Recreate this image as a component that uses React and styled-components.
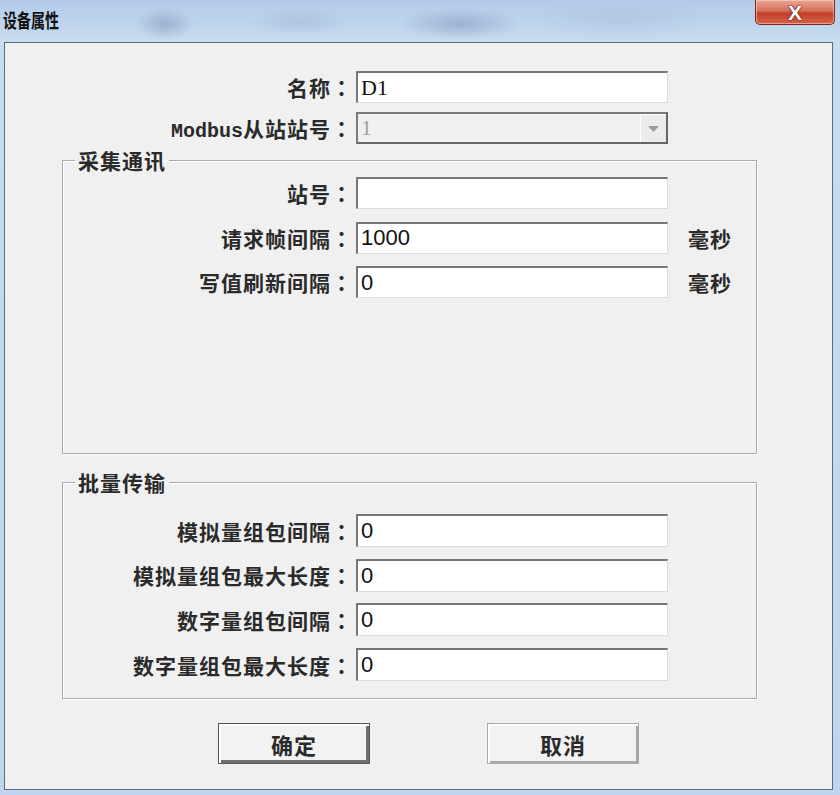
import styled, { createGlobalStyle } from "styled-components";

const GlobalStyle = createGlobalStyle`
    html, body {
        margin: 0;
        padding: 0;
    }
    body {
        width: 840px;
        height: 795px;
        overflow: hidden;
        background: #c3d8ee;
        font-family: "Liberation Sans", "Noto Sans CJK SC", sans-serif;
    }
`;

const Window = styled.div`
    width: 840px;
    height: 795px;
    box-sizing: border-box;
    display: flex;
    flex-direction: column;
    padding: 0 7px 5px 4px;
    background:
        radial-gradient(ellipse 30px 16px at 165px 24px, rgba(70, 100, 140, 0.3), transparent),
        radial-gradient(ellipse 50px 14px at 300px 22px, rgba(120, 150, 185, 0.25), transparent),
        radial-gradient(ellipse 60px 16px at 460px 24px, rgba(70, 100, 150, 0.3), transparent),
        radial-gradient(ellipse 90px 20px at 620px 20px, rgba(150, 180, 210, 0.3), transparent),
        linear-gradient(180deg, #b2cbe7 0%, #c8dcf0 42px, #bed5ed 100%);
`;

const TitleBar = styled.div`
    height: 42px;
    flex-shrink: 0;
    display: flex;
    justify-content: space-between;
    align-items: flex-start;
`;

const Title = styled.span`
    margin: 8px 0 0 -1px;
    font-family: "Noto Sans CJK SC", sans-serif;
    font-size: 14px;
    font-weight: 700;
    line-height: 16px;
    color: #111;
    display: inline-block;
    transform: scale(1, 1.4);
    transform-origin: top left;
`;

const CloseButton = styled.div`
    width: 80px;
    height: 25px;
    margin-right: -2px;
    box-sizing: border-box;
    border: 1px solid #7c2a1e;
    border-top: none;
    border-radius: 0 0 5px 5px;
    background: linear-gradient(180deg, #e9a794 0%, #d7705a 45%, #c3402b 55%, #d4624a 100%);
    box-shadow: inset 0 0 0 1px rgba(255, 220, 210, 0.5);
    display: flex;
    align-items: center;
    justify-content: center;
    color: #fff;
    font-family: "Liberation Sans", sans-serif;
    font-weight: 700;
    font-size: 21px;
    line-height: 21px;
    text-shadow: 0 0 2px #5a1a10, 0 0 1px #5a1a10, 0 0 1px #5a1a10;
`;

const Client = styled.div`
    flex: 1;
    border: 1px solid #5d6c7c;
    background: #f0f0f0;
    display: flex;
    flex-direction: column;
    padding-top: 28px;
`;

const Rows = styled.div`
    display: flex;
    flex-direction: column;
    gap: ${props => props.$gap}px;
`;

const Row = styled.div`
    display: flex;
    align-items: center;
    height: ${props => props.$h || 32}px;
`;

const Label = styled.label`
    width: ${props => props.$w}px;
    margin-right: 4px;
    text-align: right;
    font-family: "Liberation Mono", "Noto Sans CJK SC", monospace;
    font-size: 21px;
    letter-spacing: 1px;
    font-weight: 700;
    color: #2a2a2a;
    white-space: nowrap;
`;

const Latin = styled.span`
    font-size: 20px;
    letter-spacing: 0;
`;

const Colon = styled.span`
    font-family: "Noto Sans CJK TC", sans-serif;
    letter-spacing: 0;
`;

const TextBox = styled.input`
    width: 312px;
    height: 100%;
    box-sizing: border-box;
    margin: 0;
    padding: 0 3px;
    background: #fff;
    border-top: 2px solid #777;
    border-left: 2px solid #777;
    border-right: 1px solid #dcdcdc;
    border-bottom: 1px solid #dcdcdc;
    font-family: ${props => props.$serif ? `"Liberation Serif", serif` : `"Liberation Sans", sans-serif`};
    font-size: 22px;
    color: #111;
    outline: none;
`;

const Combo = styled.div`
    width: 312px;
    height: 100%;
    box-sizing: border-box;
    display: flex;
    background: #f0f0f0;
    border-top: 2px solid #7a7a7a;
    border-left: 2px solid #7a7a7a;
    border-right: 2px solid #666;
    border-bottom: 2px solid #666;
`;

const ComboValue = styled.span`
    flex: 1;
    padding-left: 3px;
    font-family: "Liberation Serif", serif;
    font-size: 22px;
    line-height: 27px;
    color: #a2a2a2;
`;

const DropButton = styled.div`
    width: 26px;
    box-sizing: border-box;
    border-top: 1px solid #fff;
    border-left: 1px solid #fff;
    background: #ececec;
    display: flex;
    align-items: center;
    justify-content: center;
`;

const Unit = styled.span`
    margin-left: 20px;
    font-family: "Noto Sans CJK SC", sans-serif;
    font-size: 21px;
    letter-spacing: 1px;
    font-weight: 700;
    color: #2a2a2a;
`;

const Group = styled.fieldset`
    width: 695px;
    box-sizing: border-box;
    margin: ${props => props.$top}px 0 0 57px;
    padding: ${props => props.$padTop}px 0 ${props => props.$padBottom}px 0;
    min-width: 0;
    border: 1px solid #a9a9a9;
    box-shadow: inset 1px 1px 0 #fff, 1px 1px 0 #fff;
`;

const Legend = styled.legend`
    margin-left: 12px;
    padding: 0 3px;
    font-family: "Noto Sans CJK SC", sans-serif;
    font-size: 21px;
    letter-spacing: 1px;
    font-weight: 700;
    line-height: 20px;
    color: #2a2a2a;
`;

const ButtonRow = styled.div`
    display: flex;
    gap: 117px;
    margin-top: 24px;
    padding-left: 213px;
`;

const Button = styled.div`
    width: 152px;
    height: 41px;
    box-sizing: border-box;
    display: flex;
    align-items: center;
    justify-content: center;
    background: #f2f2f2;
    font-family: "Noto Sans CJK SC", sans-serif;
    font-size: 22px;
    letter-spacing: 1px;
    font-weight: 700;
    color: #2a2a2a;
    border: 1px solid ${props => props.$default ? "#555" : "#a8a8a8"};
    box-shadow: ${props => props.$default
        ? "inset 2px 2px 0 #fff, inset -3px -3px 0 #707070"
        : "inset 2px 2px 0 #fff, inset -2px -2px 0 #a8a8a8"};
`;

const collectRows = [
    { label: "站号", value: "" },
    { label: "请求帧间隔", value: "1000", unit: "毫秒" },
    { label: "写值刷新间隔", value: "0", unit: "毫秒" },
];

const batchRows = [
    { label: "模拟量组包间隔", value: "0" },
    { label: "模拟量组包最大长度", value: "0" },
    { label: "数字量组包间隔", value: "0" },
    { label: "数字量组包最大长度", value: "0" },
];

function FieldRow({ row, labelWidth, h }) {
    return (
        <Row $h={h}>
            <Label $w={labelWidth}>{row.label}<Colon>：</Colon></Label>
            <TextBox readOnly defaultValue={row.value} />
            {row.unit && <Unit>{row.unit}</Unit>}
        </Row>
    );
}

export default function App() {
    return (
        <>
            <GlobalStyle />
            <Window>
                <TitleBar>
                    <Title>设备属性</Title>
                    <CloseButton>X</CloseButton>
                </TitleBar>
                <Client>
                    <Rows $gap={9}>
                        <Row>
                            <Label $w={347}>名称<Colon>：</Colon></Label>
                            <TextBox readOnly defaultValue="D1" $serif />
                        </Row>
                        <Row>
                            <Label $w={347}><Latin>Modbus</Latin>从站站号<Colon>：</Colon></Label>
                            <Combo>
                                <ComboValue>1</ComboValue>
                                <DropButton>
                                    <svg width="11" height="6" viewBox="0 0 11 6">
                                        <path d="M0 0 H11 L5.5 6 Z" fill="#9a9a9a" />
                                    </svg>
                                </DropButton>
                            </Combo>
                        </Row>
                    </Rows>

                    <Group $top={6} $padTop={7} $padBottom={155}>
                        <Legend>采集通讯</Legend>
                        <Rows $gap={12.5}>
                            {collectRows.map(row => (
                                <FieldRow key={row.label} row={row} labelWidth={289} />
                            ))}
                        </Rows>
                    </Group>

                    <Group $top={18} $padTop={22} $padBottom={17}>
                        <Legend>批量传输</Legend>
                        <Rows $gap={11.7}>
                            {batchRows.map(row => (
                                <FieldRow key={row.label} row={row} labelWidth={289} h={33} />
                            ))}
                        </Rows>
                    </Group>

                    <ButtonRow>
                        <Button $default>确定</Button>
                        <Button>取消</Button>
                    </ButtonRow>
                </Client>
            </Window>
        </>
    );
}
